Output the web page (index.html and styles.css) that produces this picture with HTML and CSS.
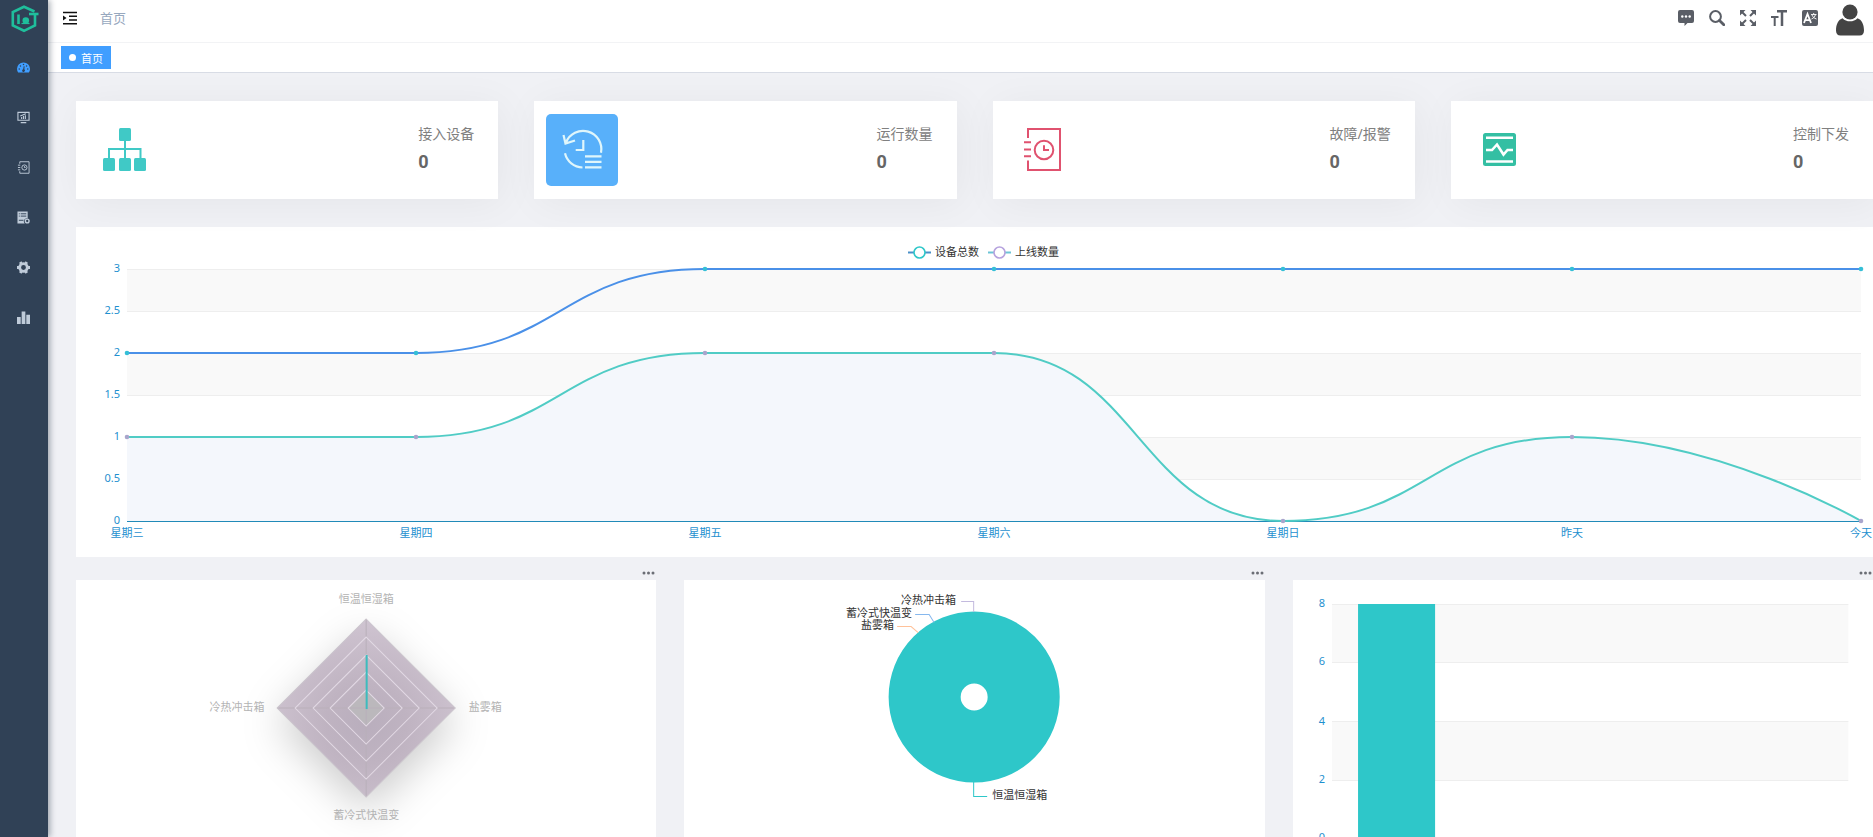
FILE: index.html
```html
<!DOCTYPE html>
<html lang="zh-CN">
<head>
<meta charset="utf-8">
<title>首页</title>
<link rel="stylesheet" href="styles.css">
</head>
<body>
<div class="app">
  <aside class="sidebar">
    <a class="logo" href="#" aria-label="IoT">
      <svg width="28" height="28" viewBox="0 0 28 28" fill="none" stroke="#1fbf9c" stroke-width="2.600">
        <path d="M23.500 6.500 13 1.800 1.800 7v13.500L13 25.800l11-5.300V10"/>
        <path d="M7.500 9.500V19"/><path d="M18 9h9.500"/>
        <circle cx="14.800" cy="15.500" r="3.300" fill="#1fbf9c" stroke="none"/>
        <path d="M10.500 18.500h8" stroke-width="1.200"/>
      </svg>
    </a>
    <nav class="menu">
      <a class="menu-item active" href="#" aria-label="首页">
        <svg viewBox="0 0 14 14" fill="currentColor"><path d="M7 1.500A6.900 6.900 0 0 0 0 8.400c0 1.500.4 2.900 1.200 4.100h11.600a7 7 0 0 0 1.200-4.100A6.900 6.900 0 0 0 7 1.500z"/><g fill="#304156"><circle cx="2.400" cy="8.700" r=".8"/><circle cx="3.700" cy="5.400" r=".8"/><circle cx="7" cy="3.800" r=".8"/><circle cx="10.300" cy="5.400" r=".8"/><circle cx="11.600" cy="8.700" r=".8"/><path d="M7.300 5.500 8.200 6l-.3 3a1.500 1.500 0 1 1-1.300-.2z"/></g></svg>
      </a>
      <a class="menu-item" href="#" aria-label="设备监控">
        <svg viewBox="0 0 14 14" fill="none" stroke="currentColor" stroke-width="1.200"><path d="M1 1.500h12v8.500H1zM4 12.500h6M5 8.500V6.500M7 8.500V5.500M9 8.500V4.500M3.500 5.500 9.500 3"/></svg>
      </a>
      <a class="menu-item" href="#" aria-label="报警记录">
        <svg viewBox="0 0 14 14" fill="none" stroke="currentColor"><path d="M3 3V.8h10v12.400H3V11M1 4.500h2.500M1 7h2.500M1 9.500h2.500"/><circle cx="8" cy="7" r="2.800"/><path d="M8 5.500V7h1.300"/></svg>
      </a>
      <a class="menu-item" href="#" aria-label="日志">
        <svg viewBox="0 0 14 14"><path d="M.5.500h11V8a3.300 3.300 0 0 0-3.200 5.500H.5z" fill="currentColor"/><path d="M4 3h6M4 5.500h6M2 3h1M2 5.500h1M2 10h5" stroke="#304156"/><circle cx="11" cy="10.800" r="2" fill="none" stroke="currentColor" stroke-width="1.500"/></svg>
      </a>
      <a class="menu-item" href="#" aria-label="系统设置">
        <svg viewBox="0 0 14 14" fill="none" stroke="currentColor"><circle cx="7" cy="7" r="4.100" stroke-width="3"/><path d="M3.500 1 5 3.500M10.500 1 9 3.500M3.500 13 5 10.500M10.500 13 9 10.500M0 7h3M14 7h-3" stroke-width="3"/></svg>
      </a>
      <a class="menu-item" href="#" aria-label="统计">
        <svg viewBox="0 0 14 14" fill="currentColor"><path d="M0 6.500h4V14H0zM5 .5h4V14H5zM10 4h4v10h-4z"/></svg>
      </a>
    </nav>
  </aside>

  <div class="main">
    <header class="navbar">
      <button class="icon-button toggle" type="button" aria-label="折叠菜单">
        <svg width="14" height="14" viewBox="0 0 14 14"><path d="M0 1.500h14M6 5.300h8M6 9h8M0 12.700h14" stroke="#111" stroke-width="1.400"/><path d="M0 4.500 3.500 7 0 9.500z" fill="#111"/></svg>
      </button>
      <a class="breadcrumb" href="#">首页</a>
      <div class="tools">
        <button class="icon-button" type="button" aria-label="消息">
          <svg width="16" height="16" viewBox="0 0 16 16" fill="#5a5e66"><path d="M2 0h12a2 2 0 0 1 2 2v9a2 2 0 0 1-2 2H9.500L6.500 16v-3H2a2 2 0 0 1-2-2V2a2 2 0 0 1 2-2z"/><g fill="#fff"><circle cx="4.300" cy="6.500" r="1.200"/><circle cx="8" cy="6.500" r="1.200"/><circle cx="11.700" cy="6.500" r="1.200"/></g></svg>
        </button>
        <button class="icon-button" type="button" aria-label="搜索">
          <svg width="16" height="16" viewBox="0 0 16 16" fill="none" stroke="#5a5e66"><circle cx="6.500" cy="6.500" r="5.400" stroke-width="2"/><path d="m10.500 10.500 4.300 4.300" stroke-width="2.800" stroke-linecap="round"/></svg>
        </button>
        <button class="icon-button" type="button" aria-label="全屏">
          <svg width="16" height="16" viewBox="0 0 16 16"><path d="M0 0h5.500L0 5.500zM16 0v5.500L10.500 0zM0 16v-5.500L5.500 16zM16 16h-5.500l5.500-5.500z" fill="#5a5e66"/><path d="m2 2 4 4M14 2l-4 4M2 14l4-4M14 14l-4-4" stroke="#5a5e66" stroke-width="2"/></svg>
        </button>
        <button class="icon-button" type="button" aria-label="字体大小">
          <svg width="16" height="16" viewBox="0 0 16 16" fill="none" stroke="#5a5e66"><path d="M6 1.300h10M11 1v15" stroke-width="2.500"/><path d="M0 7h7.500M3.700 7v9" stroke-width="2"/></svg>
        </button>
        <button class="icon-button" type="button" aria-label="语言">
          <svg width="16" height="16" viewBox="0 0 16 16"><rect width="16" height="16" rx="2" fill="#5a5e66"/><path d="M2 13 5.500 4 9 13M3.200 10.200h4.600" fill="none" stroke="#fff" stroke-width="1.800"/><path d="M9 4.500h5.500M11.700 3v1.500M9.500 9c2-.8 3.500-2.300 4-4.500M10 5c.7 2 2.300 3.300 4.500 4" fill="none" stroke="#fff" stroke-width=".9"/></svg>
        </button>
        <button class="icon-button avatar" type="button" aria-label="用户">
          <svg width="28" height="32" viewBox="0 0 28 32" fill="#444"><circle cx="14" cy="8" r="7.600"/><path d="M6.500 14.200a10.500 10.500 0 0 0 15 0C25.500 15.500 28 20 28 26.500c0 3-1.500 5-4.500 5h-19c-3 0-4.500-2-4.500-5 0-6.500 2.500-11 6.500-12.300z"/></svg>
        </button>
      </div>
    </header>
    <div class="tags">
      <a class="tag" href="#"><span class="tag-dot"></span>首页</a>
    </div>

    <main class="content">
      <section class="stats">
        <article class="stat">
          <div class="stat-icon">
            <svg viewBox="0 0 44 44" fill="#40c9c6"><rect x="17" width="12" height="13" rx="1.500"/><rect x="1" y="30" width="12" height="13" rx="1.500"/><rect x="17" y="30" width="12" height="13" rx="1.500"/><rect x="32" y="30" width="12" height="13" rx="1.500"/><path d="M23 13v17M7 30v-9h31.500v9" fill="none" stroke="#40c9c6" stroke-width="2"/></svg>
          </div>
          <div class="stat-text"><h2 class="stat-label">接入设备</h2><span class="stat-value">0</span></div>
        </article>
        <article class="stat">
          <div class="stat-icon filled">
            <svg viewBox="0 0 44 44" fill="none" stroke="#dff6fb" stroke-width="2.200"><path d="M6 14.500A18.300 18.300 0 0 1 41 24.700M5 25.300A18.300 18.300 0 0 0 22.500 39.500M3.500 7l2 8.500 9.500-3M23.300 12v10h-7.600M25 28.300h16.500M25 33.800h16.500M25 39.300h16.500"/></svg>
          </div>
          <div class="stat-text"><h2 class="stat-label">运行数量</h2><span class="stat-value">0</span></div>
        </article>
        <article class="stat">
          <div class="stat-icon">
            <svg viewBox="0 0 44 44" fill="none" stroke="#e0526f" stroke-width="2"><path d="M9 10V1h32v41H9V32.500M5 14.300h7M5 21.600h7M5 28.300h7"/><circle cx="25" cy="22" r="9.300"/><path d="M25 17.300V22h5"/></svg>
          </div>
          <div class="stat-text"><h2 class="stat-label">故障/报警</h2><span class="stat-value">0</span></div>
        </article>
        <article class="stat">
          <div class="stat-icon">
            <svg viewBox="0 0 44 44"><rect x="6" y="5" width="33" height="33" rx="2.500" fill="#34bfa3"/><path d="M9 9.700h27M9 33.500h27M9 22h6l5-5.500 6.500 10 4-4.500H36" fill="none" stroke="#fff" stroke-width="2.600"/></svg>
          </div>
          <div class="stat-text"><h2 class="stat-label">控制下发</h2><span class="stat-value">0</span></div>
        </article>
      </section>

      <section class="panel">
        <svg class="chart" viewBox="0 0 1797 330" role="img" aria-label="设备总数与上线数量">
          <g fill="#f9f9f9"><path d="M51 42h1734v42H51zM51 126h1734v42H51zM51 210h1734v42H51z"/></g>
          <path d="M51 42.500h1734M51 84.500h1734M51 126.500h1734M51 168.500h1734M51 210.500h1734M51 252.500h1734" stroke="#eee"/>
          <path d="M51 210H340C484 210 484 126 629 126H918C1062 126 1062 294 1207 294C1351 294 1351 210 1496 210C1640 210 1785 294 1785 294H51z" fill="#f3f7fc" fill-opacity=".95"/>
          <path d="M51 294.500h1734" stroke="#218ab8"/>
          <path d="M51 126H340C484 126 484 42 629 42H1785" fill="none" stroke="#4a90e8" stroke-width="2"/>
          <path d="M51 210H340C484 210 484 126 629 126H918C1062 126 1062 294 1207 294C1351 294 1351 210 1496 210C1640 210 1785 294 1785 294" fill="none" stroke="#50ccc5" stroke-width="2"/>
          <g fill="#35bfd6"><circle cx="51" cy="126" r="2.300"/><circle cx="340" cy="126" r="2.300"/><circle cx="629" cy="42" r="2.300"/><circle cx="918" cy="42" r="2.300"/><circle cx="1207" cy="42" r="2.300"/><circle cx="1496" cy="42" r="2.300"/><circle cx="1785" cy="42" r="2.300"/></g>
          <g fill="#a9a5cc"><circle cx="51" cy="210" r="2.300"/><circle cx="340" cy="210" r="2.300"/><circle cx="629" cy="126" r="2.300"/><circle cx="918" cy="126" r="2.300"/><circle cx="1207" cy="294" r="2.300"/><circle cx="1496" cy="210" r="2.300"/><circle cx="1785" cy="294" r="2.300"/></g>
          <g class="axis axis-y"><text x="44" y="45">3</text><text x="44" y="87">2.5</text><text x="44" y="129">2</text><text x="44" y="171">1.5</text><text x="44" y="213">1</text><text x="44" y="255">0.5</text><text x="44" y="297">0</text></g>
          <g class="axis axis-x"><text x="51" y="310">星期三</text><text x="340" y="310">星期四</text><text x="629" y="310">星期五</text><text x="918" y="310">星期六</text><text x="1207" y="310">星期日</text><text x="1496" y="310">昨天</text><text x="1785" y="310">今天</text></g>
          <path d="M832 25.500h23" stroke="#4a90c8" stroke-width="2"/><circle cx="843.500" cy="25.500" r="5.500" fill="#fff" stroke="#2ec7c9" stroke-width="1.600"/>
          <path d="M912 25.500h23" stroke="#6cc4d6" stroke-width="2"/><circle cx="923.500" cy="25.500" r="5.500" fill="#fff" stroke="#b6a2de" stroke-width="1.600"/>
          <g class="legend"><text x="859" y="29">设备总数</text><text x="939" y="29">上线数量</text></g>
        </svg>
      </section>

      <section class="charts">
        <article class="chart-column">
          <button class="more" type="button" aria-label="更多"><svg width="13" height="4" viewBox="0 0 13 4"><circle cx="2" cy="2" r="1.500"/><circle cx="6.500" cy="2" r="1.500"/><circle cx="11" cy="2" r="1.500"/></svg></button>
          <div class="panel">
            <svg class="chart" viewBox="0 0 580 300" role="img" aria-label="设备类型雷达图">
              <defs>
                <filter id="soft" x="-50%" y="-50%" width="200%" height="200%"><feGaussianBlur stdDeviation="21"/></filter>
                <radialGradient id="shade" gradientUnits="userSpaceOnUse" cx="290" cy="143" r="100"><stop offset="0" stop-color="#b9aebd"/><stop offset=".4" stop-color="#bfb3c1"/><stop offset="1" stop-color="#cec3d0"/></radialGradient>
              </defs>
              <path d="M290 54l89 89-89 89-89-89z" fill="#000" fill-opacity=".2" filter="url(#soft)"/>
              <path d="M290 39l89 89-89 89-89-89z" fill="url(#shade)"/>
              <path d="M290 110l18 18-18 18-18-18z" fill="#bbb8bc"/>
              <path d="M290 39v178M201 128h178" stroke="#b9b0ba"/>
              <path d="M290 110l18 18-18 18-18-18zM290 92l36 36-36 36-36-36zM290 75l53 53-53 53-53-53zM290 57l71 71-71 71-71-71z" fill="none" stroke="#e2d9e4"/>
              <path d="M290 39l89 89-89 89-89-89z" fill="none" stroke="#cbc5cd"/>
              <path d="M290.500 75v54" stroke="#3cbcbe" stroke-width="2"/>
              <g class="radar-label"><text x="290" y="23">恒温恒湿箱</text><text x="161" y="131">冷热冲击箱</text><text x="409" y="131">盐雾箱</text><text x="290" y="239">蓄冷式快温变</text></g>
            </svg>
          </div>
        </article>
        <article class="chart-column">
          <button class="more" type="button" aria-label="更多"><svg width="13" height="4" viewBox="0 0 13 4"><circle cx="2" cy="2" r="1.500"/><circle cx="6.500" cy="2" r="1.500"/><circle cx="11" cy="2" r="1.500"/></svg></button>
          <div class="panel">
            <svg class="chart" viewBox="0 0 580 300" role="img" aria-label="设备类型占比">
              <circle cx="290" cy="117" r="49.500" fill="none" stroke="#2ec7c9" stroke-width="72"/>
              <g fill="none"><path d="M277 21.500h12.500V32" stroke="#c3bade"/><path d="M231 34.500h14l5 8" stroke="#86b8ee"/><path d="M213 46.500h14l7 6" stroke="#ffc29a"/><path d="M289.500 202v14.500H303" stroke="#2ec7c9"/></g>
              <g class="pie-label"><text x="217" y="24">冷热冲击箱</text><text x="162" y="37">蓄冷式快温变</text><text x="177" y="49">盐雾箱</text><text x="308" y="219">恒温恒湿箱</text></g>
            </svg>
          </div>
        </article>
        <article class="chart-column">
          <button class="more" type="button" aria-label="更多"><svg width="13" height="4" viewBox="0 0 13 4"><circle cx="2" cy="2" r="1.500"/><circle cx="6.500" cy="2" r="1.500"/><circle cx="11" cy="2" r="1.500"/></svg></button>
          <div class="panel">
            <svg class="chart" viewBox="0 0 580 300" role="img" aria-label="设备类型数量">
              <path d="M39 24h516v58H39zM39 141h516v59H39z" fill="#f9f9f9"/>
              <path d="M39 24.500h516M39 82.500h516M39 141.500h516M39 200.500h516M39 258.500h516" stroke="#eee"/>
              <rect x="65" y="24" width="77" height="235" fill="#2ec7c9"/>
              <g class="axis axis-y"><text x="32" y="27">8</text><text x="32" y="85">6</text><text x="32" y="145">4</text><text x="32" y="203">2</text><text x="32" y="261">0</text></g>
            </svg>
          </div>
        </article>
      </section>
    </main>
  </div>
</div>
</body>
</html>
```

FILE: styles.css
```css
* {
  box-sizing: border-box;
}

body {
  margin: 0;
  font-family: "Noto Sans", "Noto Sans CJK SC", sans-serif;
  font-size: 14px;
  color: #303133;
}

a {
  text-decoration: none;
}

svg {
  display: block;
}

.app {
  display: flex;
  height: 100vh;
  overflow: hidden;
}

.sidebar {
  position: relative;
  z-index: 1;
  flex: 0 0 48px;
  background: #304156;
  box-shadow: 2px 0 6px rgba(0, 21, 41, 0.35);
}

.logo {
  display: flex;
  align-items: center;
  justify-content: center;
  height: 42px;
  padding: 0 0 4px 2px;
}

.menu {
  display: flex;
  flex-direction: column;
}

.menu-item {
  display: flex;
  align-items: center;
  height: 50px;
  padding-left: 17px;
  color: #bfcbd9;
}

.menu-item svg {
  width: 13px;
  height: 13px;
}

.menu-item.active {
  color: #409eff;
}

.main {
  flex: 1;
  min-width: 0;
  background: #f0f1f5;
}

.navbar {
  display: flex;
  align-items: center;
  height: 43px;
  padding: 0 9px 6px 15px;
  background: #fff;
  border-bottom: 1px solid #f2f3f5;
}

.icon-button,
.more {
  padding: 0;
  border: 0;
  background: none;
  cursor: pointer;
}

.breadcrumb {
  margin-left: 23px;
  padding-bottom: 1px;
  font-size: 13px;
  color: #97a8be;
}

.tools {
  display: flex;
  align-items: center;
  gap: 15px;
  margin-left: auto;
}

.avatar {
  margin-left: 3px;
  padding-top: 3px;
}

.tags {
  height: 30px;
  padding: 3px 13px;
  background: #fff;
  border-bottom: 1px solid #d8dce5;
}

.tag {
  display: inline-flex;
  align-items: center;
  gap: 5px;
  height: 23px;
  padding: 0 8px;
  background: #409eff;
  font-size: 11px;
  color: #fff;
}

.tag-dot {
  width: 7px;
  height: 7px;
  border-radius: 50%;
  background: #fff;
}

.content {
  padding: 28px 0 28px 28px;
}

.stats {
  display: grid;
  grid-template-columns: repeat(4, 1fr);
  gap: 36px;
  margin-bottom: 28px;
}

.stat {
  display: flex;
  align-items: center;
  justify-content: space-between;
  height: 98px;
  padding: 0 24px 0 12px;
  background: #fff;
  box-shadow: 4px 4px 40px rgba(0, 0, 0, 0.05);
}

.stat-icon {
  padding: 14px;
  border-radius: 5px;
}

.stat-icon svg {
  width: 44px;
  height: 44px;
}

.stat-icon.filled {
  background: #58b0fa;
}

.stat-label {
  margin: 0 0 8px;
  font-size: 14px;
  font-weight: 400;
  line-height: 20px;
  color: #808080;
}

.stat-value {
  display: block;
  font-family: Roboto, sans-serif;
  font-size: 18px;
  font-weight: 700;
  line-height: 20px;
  color: #666;
}

.stat-text {
  padding-bottom: 4px;
}

.panel {
  background: #fff;
}

.chart {
  width: 100%;
  height: auto;
}

.chart text {
  font-size: 11px;
}

.axis {
  fill: #1e90cf;
}

.axis-y {
  text-anchor: end;
}

.axis-x,
.radar-label {
  text-anchor: middle;
}

.legend,
.pie-label {
  fill: #333;
}

.radar-label {
  fill: #b3b3b3;
}

.charts {
  display: grid;
  grid-template-columns: repeat(3, 1fr);
  gap: 28px;
}

.chart-column {
  display: flex;
  flex-direction: column;
}

.more {
  display: flex;
  align-items: center;
  align-self: flex-end;
  height: 23px;
  padding: 9px 1px 0 0;
  fill: #6b6e75;
}
```
